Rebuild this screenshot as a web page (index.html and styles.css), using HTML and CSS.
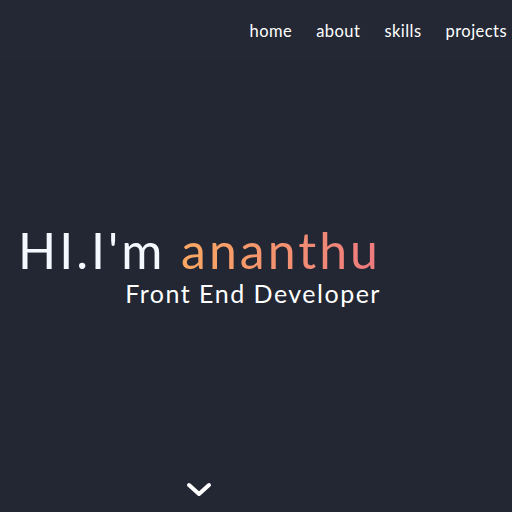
FILE: index.html
```html
<!DOCTYPE html>
<html>
<head>
<meta charset="utf-8">
<link rel="stylesheet" href="styles.css">
</head>
<body>
<header class="nav">
  <a class="nav-link">home</a>
  <a class="nav-link">about</a>
  <a class="nav-link">skills</a>
  <a class="nav-link">projects</a>
</header>
<main class="hero">
  <div class="intro">
    <h1 class="title">HI.I'm <span class="name">ananthu</span></h1>
    <h2 class="subtitle">Front End Developer</h2>
  </div>
  <div class="down">
    <svg width="26" height="16" viewBox="0 0 26 16"><path d="M3 3 L13 12 L23 3" fill="none" stroke="#ffffff" stroke-width="4" stroke-linecap="round" stroke-linejoin="round"/></svg>
  </div>
</main>
</body>
</html>
```
FILE: styles.css
```css
html, body { margin: 0; padding: 0; }
body {
  background: #222733;
  height: 512px;
  overflow: hidden;
  font-family: "Lato", "Noto Sans", sans-serif;
  color: #ffffff;
}
.nav {
  height: 62px;
  background: #232834;
  display: flex;
  justify-content: flex-end;
  align-items: center;
  gap: 24px;
  padding-right: 5px;
  box-sizing: border-box;
}
.nav-link {
  font-size: 16.5px;
  color: #ffffff;
  letter-spacing: 0.45px;
}
.hero {
  height: 450px;
  display: flex;
  flex-direction: column;
  padding-left: 18px;
}
.intro {
  margin-top: 160px;
  display: inline-flex;
  flex-direction: column;
  align-items: flex-end;
  align-self: flex-start;
}
.title {
  margin: 0;
  font-size: 50px;
  font-weight: 400;
  line-height: 56px;
  color: #f4f8ff;
  letter-spacing: 3px;
}
.name {
  background: linear-gradient(90deg, #f9a862, #ee7a7f);
  -webkit-background-clip: text;
  background-clip: text;
  color: transparent;
}
.subtitle {
  margin: 0;
  font-size: 25px;
  font-weight: 400;
  line-height: 30px;
  color: #ffffff;
  letter-spacing: 1.5px;
}
.down {
  margin-top: auto;
  margin-bottom: 14px;
  align-self: flex-start;
  margin-left: 168px;
  line-height: 0;
}
```
